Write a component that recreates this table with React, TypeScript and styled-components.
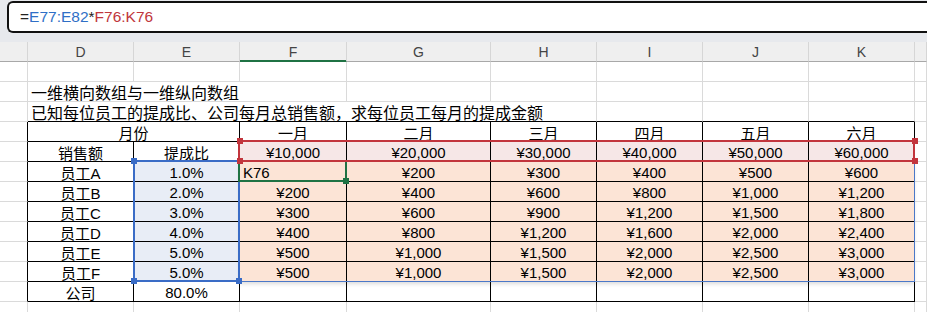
import React from 'react';
import styled, { createGlobalStyle, css } from 'styled-components';

const GlobalStyle = createGlobalStyle`
  html, body { margin: 0; padding: 0; background: #fff; overflow: hidden; }
  body { font-family: "Liberation Sans", "Noto Sans CJK SC", sans-serif; }
`;

const GRID = '#dadada';
const INK = '#000';
const PINK = '#f6e7e7';
const PEACH = '#fce4d6';
const BLUEFILL = '#e8edf6';
const RED = '#c2353d';
const BLUE = '#3a6cc6';
const GREEN = '#1f7244';
const SPILL = '#4a78c8';

const TopArea = styled.div`
  height: 42px;
  box-sizing: border-box;
  padding: 1px 0 0 7px;
  background: #e7e9ed;
`;

const FormulaBox = styled.div`
  height: 32px;
  box-sizing: border-box;
  border: 2px solid #111;
  border-right: none;
  border-radius: 6px 0 0 6px;
  background: #fff;
  display: flex;
  align-items: center;
  padding-left: 11px;
  font-size: 15.5px;
  color: #222;
  white-space: nowrap;
`;

const Ref = styled.span<{ $c: string }>`
  color: ${(p) => p.$c};
`;

const Sheet = styled.div`
  position: relative;
  display: grid;
  grid-template-columns: 28px 106px 106px 107px 144px 106px 106px 106px 106px 1fr;
  grid-auto-rows: 20px;
`;

const ColHead = styled.div<{ $active?: boolean }>`
  box-sizing: border-box;
  background: #efefef;
  border-right: 1px solid #d6d6d6;
  border-bottom: 1px solid ${(p) => (p.$active ? GREEN : '#a8a8a8')};
  ${(p) =>
    p.$active &&
    css`
      box-shadow: inset 0 -1px 0 ${GREEN};
    `}
  display: flex;
  align-items: center;
  justify-content: center;
  font-size: 14px;
  color: #444;
`;

const Cell = styled.div<{
  $span?: number;
  $bg?: string;
  $r?: string;
  $b?: string;
  $left?: boolean;
  $size?: number;
}>`
  box-sizing: border-box;
  grid-column: span ${(p) => p.$span ?? 1};
  background: ${(p) => p.$bg ?? 'transparent'};
  border-right: 1px solid ${(p) => p.$r ?? GRID};
  border-bottom: 1px solid ${(p) => p.$b ?? GRID};
  display: flex;
  align-items: center;
  justify-content: ${(p) => (p.$left ? 'flex-start' : 'center')};
  padding: 1px 3px 0;
  font-size: ${(p) => p.$size ?? 15}px;
  color: #000;
  white-space: nowrap;
  overflow: visible;
`;

const RangeBox = styled.div<{ $x: number; $y: number; $w: number; $h: number; $c: string; $z: number }>`
  position: absolute;
  left: ${(p) => p.$x}px;
  top: ${(p) => p.$y}px;
  width: ${(p) => p.$w}px;
  height: ${(p) => p.$h}px;
  box-sizing: border-box;
  border: 2px solid ${(p) => p.$c};
  z-index: ${(p) => p.$z};
  pointer-events: none;
`;

const SpillBox = styled.div`
  position: absolute;
  left: 239px;
  top: 119px;
  width: 676px;
  height: 121px;
  box-sizing: border-box;
  border-right: 1px solid ${SPILL};
  border-bottom: 1px solid ${SPILL};
  box-shadow: 0 3px 4px -1px rgba(0, 0, 0, 0.14);
  z-index: 1;
  pointer-events: none;
`;

const Handle = styled.span<{ $x: number; $y: number; $c: string; $z: number }>`
  position: absolute;
  left: ${(p) => p.$x - 3}px;
  top: ${(p) => p.$y - 3 - 42}px;
  width: 6px;
  height: 6px;
  background: ${(p) => p.$c};
  z-index: ${(p) => p.$z};
`;

const letters = ['', 'D', 'E', 'F', 'G', 'H', 'I', 'J', 'K', ''];
const months = ['一月', '二月', '三月', '四月', '五月', '六月'];
const sales = ['¥10,000', '¥20,000', '¥30,000', '¥40,000', '¥50,000', '¥60,000'];
const staff: [string, string, string[]][] = [
  ['员工A', '1.0%', ['K76', '¥200', '¥300', '¥400', '¥500', '¥600']],
  ['员工B', '2.0%', ['¥200', '¥400', '¥600', '¥800', '¥1,000', '¥1,200']],
  ['员工C', '3.0%', ['¥300', '¥600', '¥900', '¥1,200', '¥1,500', '¥1,800']],
  ['员工D', '4.0%', ['¥400', '¥800', '¥1,200', '¥1,600', '¥2,000', '¥2,400']],
  ['员工E', '5.0%', ['¥500', '¥1,000', '¥1,500', '¥2,000', '¥2,500', '¥3,000']],
  ['员工F', '5.0%', ['¥500', '¥1,000', '¥1,500', '¥2,000', '¥2,500', '¥3,000']],
];

const PlainRow: React.FC = () => (
  <>
    {letters.map((_, i) => (
      <Cell key={i} />
    ))}
  </>
);

export default function App() {
  return (
    <>
      <GlobalStyle />
      <TopArea>
        <FormulaBox>
          =<Ref $c="#2f6fc6">E77:E82</Ref>*<Ref $c="#c0363c">F76:K76</Ref>
        </FormulaBox>
      </TopArea>
      <Sheet>
        {letters.map((l, i) => (
          <ColHead key={i} $active={l === 'F'}>
            {l}
          </ColHead>
        ))}

        {/* row 72 */}
        <PlainRow />

        {/* row 73 */}
        <Cell />
        <Cell $span={3} $left $size={16}>
          一维横向数组与一维纵向数组
        </Cell>
        {[0, 1, 2, 3, 4, 5].map((i) => (
          <Cell key={i} />
        ))}

        {/* row 74 */}
        <Cell />
        <Cell $span={5} $left $size={16} $b={INK}>
          已知每位员工的提成比、公司每月总销售额，求每位员工每月的提成金额
        </Cell>
        <Cell $b={INK} />
        <Cell $b={INK} />
        <Cell $b={INK} />
        <Cell />

        {/* row 75 */}
        <Cell $r={INK} />
        <Cell $span={2} $r={INK} $b={INK}>
          月份
        </Cell>
        {months.map((m) => (
          <Cell key={m} $r={INK} $b={INK}>
            {m}
          </Cell>
        ))}
        <Cell />

        {/* row 76 */}
        <Cell $r={INK} />
        <Cell $r={INK} $b={INK}>
          销售额
        </Cell>
        <Cell $r={INK} $b={INK}>
          提成比
        </Cell>
        {sales.map((s) => (
          <Cell key={s} $r={INK} $b={INK} $bg={PINK}>
            {s}
          </Cell>
        ))}
        <Cell />

        {/* rows 77-82 */}
        {staff.map(([name, pct, vals]) => (
          <React.Fragment key={name}>
            <Cell $r={INK} />
            <Cell $r={INK} $b={INK}>
              {name}
            </Cell>
            <Cell $r={INK} $b={INK} $bg={BLUEFILL}>
              {pct}
            </Cell>
            {vals.map((v, i) => (
              <Cell key={i} $r={INK} $b={INK} $bg={PEACH} $left={v === 'K76'}>
                {v}
              </Cell>
            ))}
            <Cell />
          </React.Fragment>
        ))}

        {/* row 83 */}
        <Cell $r={INK} />
        <Cell $r={INK} $b={INK}>
          公司
        </Cell>
        <Cell $r={INK} $b={INK}>
          80.0%
        </Cell>
        {[0, 1, 2, 3, 4, 5].map((i) => (
          <Cell key={i} $r={INK} $b={INK} />
        ))}
        <Cell />

        {/* row 84 */}
        <PlainRow />

        <SpillBox />
        <RangeBox $x={133} $y={118} $w={107} $h={122} $c={BLUE} $z={2} />
        <RangeBox $x={238} $y={118} $w={109} $h={22} $c={GREEN} $z={3} />
        <RangeBox $x={238} $y={98} $w={677} $h={22} $c={RED} $z={4} />

        <Handle $x={133.5} $y={161} $c={BLUE} $z={5} />
        <Handle $x={133.5} $y={281} $c={BLUE} $z={5} />
        <Handle $x={239} $y={281} $c={BLUE} $z={5} />
        <Handle $x={346} $y={181} $c={GREEN} $z={5} />
        <Handle $x={239.5} $y={141} $c={RED} $z={6} />
        <Handle $x={914.5} $y={141} $c={RED} $z={6} />
        <Handle $x={239.5} $y={161} $c={RED} $z={6} />
        <Handle $x={914.5} $y={161} $c={RED} $z={6} />
      </Sheet>
    </>
  );
}
